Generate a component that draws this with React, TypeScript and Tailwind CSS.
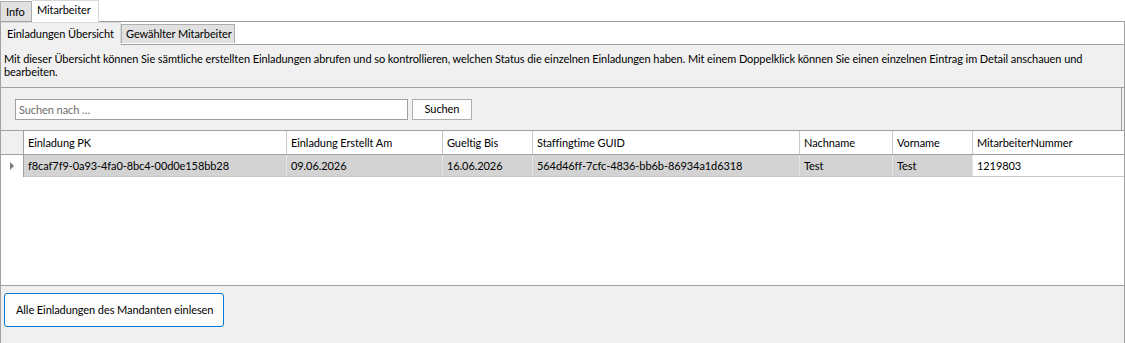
import React from "react";

const columns = [
  { title: "Einladung PK", width: "w-[263px]" },
  { title: "Einladung Erstellt Am", width: "w-[156px]" },
  { title: "Gueltig Bis", width: "w-[90px]" },
  { title: "Staffingtime GUID", width: "w-[267px]" },
  { title: "Nachname", width: "w-[93px]" },
  { title: "Vorname", width: "w-[80px]" },
  { title: "MitarbeiterNummer", width: "flex-1" },
];

const row = [
  "f8caf7f9-0a93-4fa0-8bc4-00d0e158bb28",
  "09.06.2026",
  "16.06.2026",
  "564d46ff-7cfc-4836-bb6b-86934a1d6318",
  "Test",
  "Test",
  "1219803",
];

function App() {
  return (
    <div className="w-[1125px] h-[343px] overflow-hidden bg-white text-[11px] tracking-[-0.08px] text-black font-['Lato','Liberation_Sans',sans-serif] flex flex-col">
      {/* main tabs */}
      <div className="flex h-[22px] items-end border-b border-[#a0a0a0]">
        <div className="h-[20px] w-[32px] border border-[#adadad] border-b-0 bg-[#e1e1e1] pl-[5px] leading-[19px] whitespace-nowrap">
          Info
        </div>
        <div className="h-[22px] w-[67px] border border-[#d9d9d9] border-l-0 border-b-0 bg-white pl-[5px] leading-[18px] -mb-px whitespace-nowrap">
          Mitarbeiter
        </div>
      </div>

      <div className="flex-1 flex flex-col border-l border-r border-[#a0a0a0]">
        {/* sub tabs */}
        <div className="flex h-[23px] items-end border-b border-[#a0a0a0]">
          <div className="h-[23px] w-[120px] border border-[#d9d9d9] border-b-0 border-l-0 bg-[#f0f0f0] pl-[6px] leading-[21px] -mb-px whitespace-nowrap">
            Einladungen Übersicht
          </div>
          <div className="h-[19px] w-[114px] border border-[#adadad] border-b-0 bg-[#e1e1e1] pl-[4px] leading-[18px] mb-px whitespace-nowrap">
            Gewählter Mitarbeiter
          </div>
        </div>

        <div className="flex-1 flex flex-col bg-[#f0f0f0]">
          <p className="pl-[3px] pt-[7px] leading-[13px] h-[42px] whitespace-nowrap">
            Mit dieser Übersicht können Sie sämtliche erstellten Einladungen abrufen und so kontrollieren, welchen Status die einzelnen Einladungen haben. Mit einem Doppelklick können Sie einen einzelnen Eintrag im Detail anschauen und
            <br />
            bearbeiten.
          </p>

          {/* panel */}
          <div className="h-[199px] border-t border-b border-[#a0a0a0] flex flex-col">
            <div className="h-[42px] flex items-center gap-[4px] pl-[14px] border-r border-[#a0a0a0] mr-[2px]">
              <input
                className="w-[393px] h-[21px] bg-white border border-[#a0a0a0] px-[3px] text-[11px] outline-none placeholder:text-[#6d6d6d]"
                placeholder="Suchen nach …"
              />
              <button className="w-[60px] h-[21px] bg-[#fdfdfd] border border-[#adadad] text-[11px]">
                Suchen
              </button>
            </div>

            {/* grid */}
            <div className="flex-1 bg-white border-t border-[#a0a0a0] flex flex-col">
              <div className="flex h-[24px] border-b border-[#a0a0a0]">
                <div className="w-[23px] bg-[#f0f0f0] border-r border-[#a0a0a0]" />
                {columns.map((c, i) => (
                  <div
                    key={c.title}
                    className={`${c.width} ${i < columns.length - 1 ? "border-r border-[#c8c8c8]" : ""} pl-[4px] leading-[24px] whitespace-nowrap`}
                  >
                    {c.title}
                  </div>
                ))}
              </div>
              <div className="flex h-[22px]">
                <div className="w-[23px] bg-white border-r border-[#a0a0a0] flex items-center justify-center">
                  <svg width="5" height="8" viewBox="0 0 5 8">
                    <path d="M0 0 L4 4 L0 8 Z" fill="#7a7a7a" />
                  </svg>
                </div>
                <div className="flex flex-1 border-b border-[#c8c8c8]">
                  {row.map((v, i) => (
                    <div
                      key={i}
                      className={`${columns[i].width} ${i < row.length - 1 ? "bg-[#d3d3d3] border-r border-[#e4e4e4]" : "bg-white"} pl-[4px] leading-[21px] whitespace-nowrap`}
                    >
                      {v}
                    </div>
                  ))}
                </div>
              </div>
            </div>
          </div>

          <div className="pl-[3px] pt-[7px]">
            <button className="w-[220px] h-[34px] bg-[#fdfdfd] border border-[#0078d7] rounded-[3px] text-left pl-[11px] text-[11px] whitespace-nowrap">
              Alle Einladungen des Mandanten einlesen
            </button>
          </div>
        </div>
      </div>
    </div>
  );
}

export default App;
